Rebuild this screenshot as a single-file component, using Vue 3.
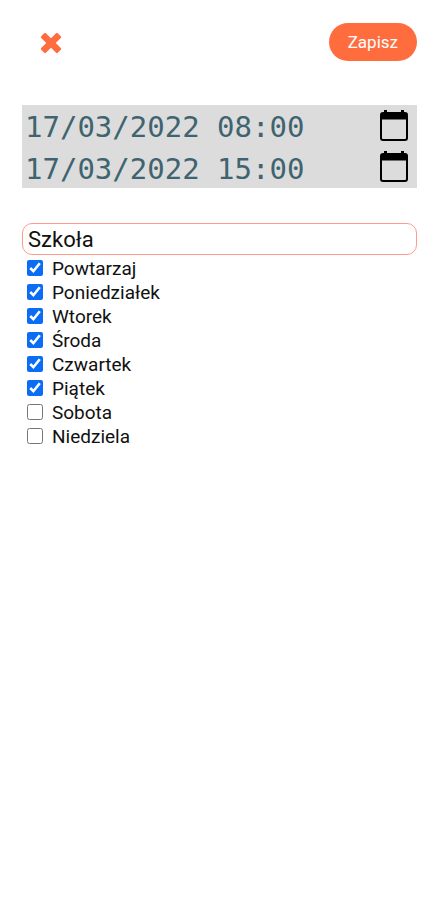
<script setup>
import { ref, reactive } from 'vue'

const title = ref('Szkoła')
const dates = reactive([
  { id: 'start', label: 'Początek', value: '17/03/2022 08:00' },
  { id: 'end', label: 'Koniec', value: '17/03/2022 15:00' },
])
const options = reactive([
  { id: 'repeat', label: 'Powtarzaj', checked: true },
  { id: 'mon', label: 'Poniedziałek', checked: true },
  { id: 'tue', label: 'Wtorek', checked: true },
  { id: 'wed', label: 'Środa', checked: true },
  { id: 'thu', label: 'Czwartek', checked: true },
  { id: 'fri', label: 'Piątek', checked: true },
  { id: 'sat', label: 'Sobota', checked: false },
  { id: 'sun', label: 'Niedziela', checked: false },
])
</script>

<template>
  <form class="editor" @submit.prevent>
    <header class="bar">
      <button class="close" type="button" aria-label="Zamknij">
        <svg viewBox="0 0 22 22" width="22" height="22" aria-hidden="true">
          <path
            d="M5.900 1.200 11 6.300l5.100-5.100a1.200 1.200 0 0 1 1.700 0l3 3a1.200 1.200 0 0 1 0 1.700L15.700 11l5.100 5.100a1.200 1.200 0 0 1 0 1.700l-3 3a1.200 1.200 0 0 1-1.700 0L11 15.700l-5.100 5.100a1.200 1.200 0 0 1-1.700 0l-3-3a1.200 1.200 0 0 1 0-1.700L6.300 11 1.200 5.900a1.200 1.200 0 0 1 0-1.700l3-3a1.200 1.200 0 0 1 1.700 0z"
            fill="#ff6d3f"
          />
        </svg>
      </button>
      <button class="save" type="submit">Zapisz</button>
    </header>

    <div class="dates">
      <div v-for="date in dates" :key="date.id" class="date">
        <input v-model="date.value" class="date-input" type="text" :aria-label="date.label" />
        <button class="picker" type="button" aria-label="Wybierz datę">
          <svg viewBox="0 0 30 32" width="30" height="32" aria-hidden="true">
            <path
              d="M5 0h3v2h14V0h3v2h1a3 3 0 0 1 3 3v23a3 3 0 0 1-3 3H4a3 3 0 0 1-3-3V5a3 3 0 0 1 3-3h1zM3 9.500V28a1 1 0 0 0 1 1h22a1 1 0 0 0 1-1V9.500z"
              fill="#000"
              fill-rule="evenodd"
            />
          </svg>
        </button>
      </div>
    </div>

    <input v-model="title" class="title" type="text" aria-label="Nazwa" />

    <div class="options">
      <label v-for="option in options" :key="option.id" class="option" :for="option.id">
        <input :id="option.id" v-model="option.checked" class="box" type="checkbox" />
        <span>{{ option.label }}</span>
      </label>
    </div>
  </form>
</template>

<style>
body {
  background: #fff;
}
</style>

<style scoped>
.editor {
  display: flex;
  flex-direction: column;
  padding: 23px 21px 0 22px;
  font-family: Roboto, sans-serif;
  color: #111;
}
.bar {
  display: flex;
  align-items: center;
  justify-content: space-between;
  margin-bottom: 44px;
}
button {
  border: 0;
  padding: 0;
  background: none;
  cursor: pointer;
}
.close {
  display: flex;
  margin-left: 18px;
  padding-top: 2px;
}
.save {
  height: 38px;
  padding: 0 19px;
  border-radius: 19px;
  background: #ff6d3f;
  color: #fff;
  font: 400 17px/20px Roboto, sans-serif;
}
.dates {
  padding-right: 8px;
  background: #dcdcdc;
  margin-bottom: 35px;
}
.date {
  display: flex;
  align-items: center;
  height: 41px;
}
.date:last-child {
  height: 42px;
}
.date-input {
  flex: 1;
  min-width: 0;
  height: 41px;
  padding: 3px 3px 0;
  box-sizing: border-box;
  border: 0;
  outline: 0;
  background: none;
  color: #3f6470;
  font: 400 29px/36px "DejaVu Sans Mono", monospace;
}
.picker {
  display: flex;
}
.title {
  width: 100%;
  height: 32px;
  box-sizing: border-box;
  padding: 0 5px;
  border: 1px solid #ff9a8c;
  border-radius: 10px;
  outline: 0;
  background: #fff;
  color: #111;
  font: 400 22px/28px Roboto, sans-serif;
}
.options {
  display: flex;
  flex-direction: column;
  padding: 2px 5px;
}
.option {
  display: flex;
  align-items: center;
  gap: 9px;
  font-size: 19px;
  line-height: 24px;
}
.box {
  width: 16px;
  height: 16px;
  margin: 0 0 2px;
  accent-color: #0b6cf5;
}
</style>
